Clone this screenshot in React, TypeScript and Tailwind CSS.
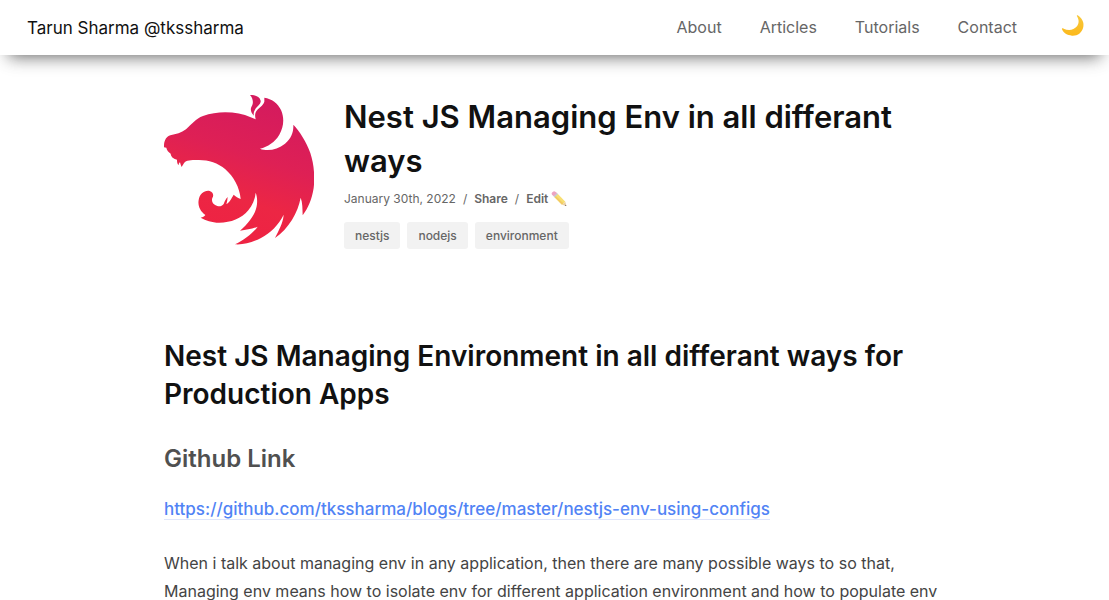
const navLinks = ["About", "Articles", "Tutorials", "Contact"];
const tags = ["nestjs", "nodejs", "environment"];

function MoonIcon() {
  return (
    <svg viewBox="0 0 72 66" className="h-[22px] w-6" aria-hidden="true">
      <defs>
        <linearGradient id="moon" x1="0" y1="0" x2="0" y2="1">
          <stop offset="0" stopColor="#f7c83c" />
          <stop offset="1" stopColor="#fcb91c" />
        </linearGradient>
      </defs>
      <path
        d="M50 1C62 9 70 21 67 35C64 53 49 63 33 62C19 61 7 54 3 43C2 40 5 39 8 41C22 48 38 46 48 34C55 25 54 13 48 4C47 2 48 0 50 1Z"
        fill="url(#moon)"
      />
    </svg>
  );
}

function PencilIcon() {
  return (
    <svg viewBox="0 0 48 48" className="h-4 w-4" aria-hidden="true">
      <path d="M10 18L20 8L43 32L33 41Z" fill="#f8df72" />
      <path d="M10 18L14 14L37 37L33 41Z" fill="#f3cb62" />
      <path d="M33 41L43 32L46 45Z" fill="#ecd0a4" />
      <path d="M41 44L45 41L46 45Z" fill="#655b58" />
      <path d="M7 15L17 5L21 9L11 19Z" fill="#c4cbd3" />
      <path d="M3 11Q0 6 5 3Q9 -1 13 2L18 6L8 16Z" fill="#eda3c2" />
    </svg>
  );
}

function NestLogo() {
  return (
    <svg
      viewBox="42 30 450 450"
      className="size-[150px] shrink-0"
      role="img"
      aria-label="NestJS"
    >
      <defs>
        <linearGradient id="nest" gradientUnits="userSpaceOnUse" x1="370" y1="70" x2="250" y2="440">
          <stop offset="0" stopColor="#d51b5d" />
          <stop offset="0.4" stopColor="#de2055" />
          <stop offset="0.75" stopColor="#ec2644" />
          <stop offset="1" stopColor="#ee2343" />
        </linearGradient>
      </defs>
      <g fill="url(#nest)">
        <path d="M300 30C312 29 329 34 332 47C334 57 320 65 315 74C311 80 310 86 312 92C304 84 300 75 304 66C312 54 309 40 300 30Z" />
        <path d="M42 180C43 165 50 154 61 151C78 147 94 144 108 133C126 117 137 101 159 93C207 76 264 80 302 97L317 103C314 92 315 84 320 77C326 68 339 63 343 50L343 38C365 41 384 55 393 75C404 99 401 127 388 149C375 171 353 185 330 191C352 200 382 195 405 176C424 160 431 141 430 119C448 138 470 171 481 204C492 238 495 274 491 309C486 342 474 370 458 391C457 371 458 353 452 338C444 382 416 431 375 459C386 436 399 415 401 389C386 420 361 444 333 459C309 471 282 480 255 478C280 467 308 446 323 425C307 431 289 435 270 437C297 413 318 387 321 357C322 344 321 333 317 323C315 344 307 361 295 376C274 401 243 413 208 413C184 413 168 406 152 398C158 397 163 394 166 390C150 379 143 362 146 345C149 326 164 315 179 318C190 321 192 332 187 339C183 350 190 360 202 363C210 366 216 362 221 357C224 348 227 342 233 336C232 344 232 350 229 357C239 353 244 340 251 329C256 334 265 339 272 342C269 307 251 275 226 253C204 234 176 225 147 225C130 225 113 225 105 231C101 235 99 240 95 246C92 240 91 236 90 232C87 234 86 237 86 241C82 237 81 231 81 224C68 221 63 214 62 206C56 202 50 195 49 188L42 187Z" />
      </g>
    </svg>
  );
}

export default function App() {
  return (
    <div className="min-h-screen bg-white font-['Inter',sans-serif] text-[#444]">
      <header className="flex h-[55px] items-center justify-between bg-white pr-6 pl-[27px] shadow-[0_12px_18px_-6px_rgba(0,0,0,0.14),0_10px_16px_-10px_rgba(0,0,0,0.55)]">
        <a href="#home" className="pt-0.5 text-[17px] text-[#111]">
          Tarun Sharma @tkssharma
        </a>
        <nav className="flex items-center gap-[38px]">
          {navLinks.map((label) => (
            <a key={label} href={`#${label}`} className="pb-0.5 text-base text-[#666]">
              {label}
            </a>
          ))}
          <button type="button" aria-label="Toggle dark mode" className="ml-1.5 pb-1">
            <MoonIcon />
          </button>
        </nav>
      </header>

      <main className="mx-auto max-w-[821px] px-5 pt-10">
        <div className="flex items-start gap-[30px]">
          <NestLogo />
          <div>
            <h1 className="max-w-[580px] text-[31px] leading-11 font-semibold text-[#111]">
              Nest JS Managing Env in all differant ways
            </h1>
            <div className="mt-1.5 flex items-center gap-[7px] text-xs leading-5 text-[#666]">
              <time dateTime="2022-01-30">January 30th, 2022</time>
              <span>/</span>
              <a href="#share" className="font-semibold">Share</a>
              <span>/</span>
              <a href="#edit" className="flex items-center gap-[3px] font-semibold">
                Edit <PencilIcon />
              </a>
            </div>
            <div className="mt-[13px] flex gap-[7px]">
              {tags.map((tag) => (
                <a
                  key={tag}
                  href={`#${tag}`}
                  className="rounded-[3px] bg-[#f2f2f2] px-[11px] text-xs leading-[27px] font-medium text-[#666]"
                >
                  {tag}
                </a>
              ))}
            </div>
          </div>
        </div>

        <article className="mt-22 text-base leading-7">
          <h2 className="text-[28px] leading-[38px] font-semibold text-[#111]">
            Nest JS Managing Environment in all differant ways for Production Apps
          </h2>
          <h3 className="mt-7 text-2xl leading-9 font-semibold text-[#505050]">Github Link</h3>
          <p className="mt-[18px]">
            <a
              href="https://github.com/tkssharma/blogs/tree/master/nestjs-env-using-configs"
              className="border-b border-[#dfe6fb] text-[17px] font-medium text-[#5183f5]"
            >
              https://github.com/tkssharma/blogs/tree/master/nestjs-env-using-configs
            </a>
          </p>
          <p className="mt-[26px]">
            When i talk about managing env in any application, then there are many possible ways to so that,{" "}
            <br />
            Managing env means how to isolate env for different application environment and how to populate env
          </p>
        </article>
      </main>
    </div>
  );
}
